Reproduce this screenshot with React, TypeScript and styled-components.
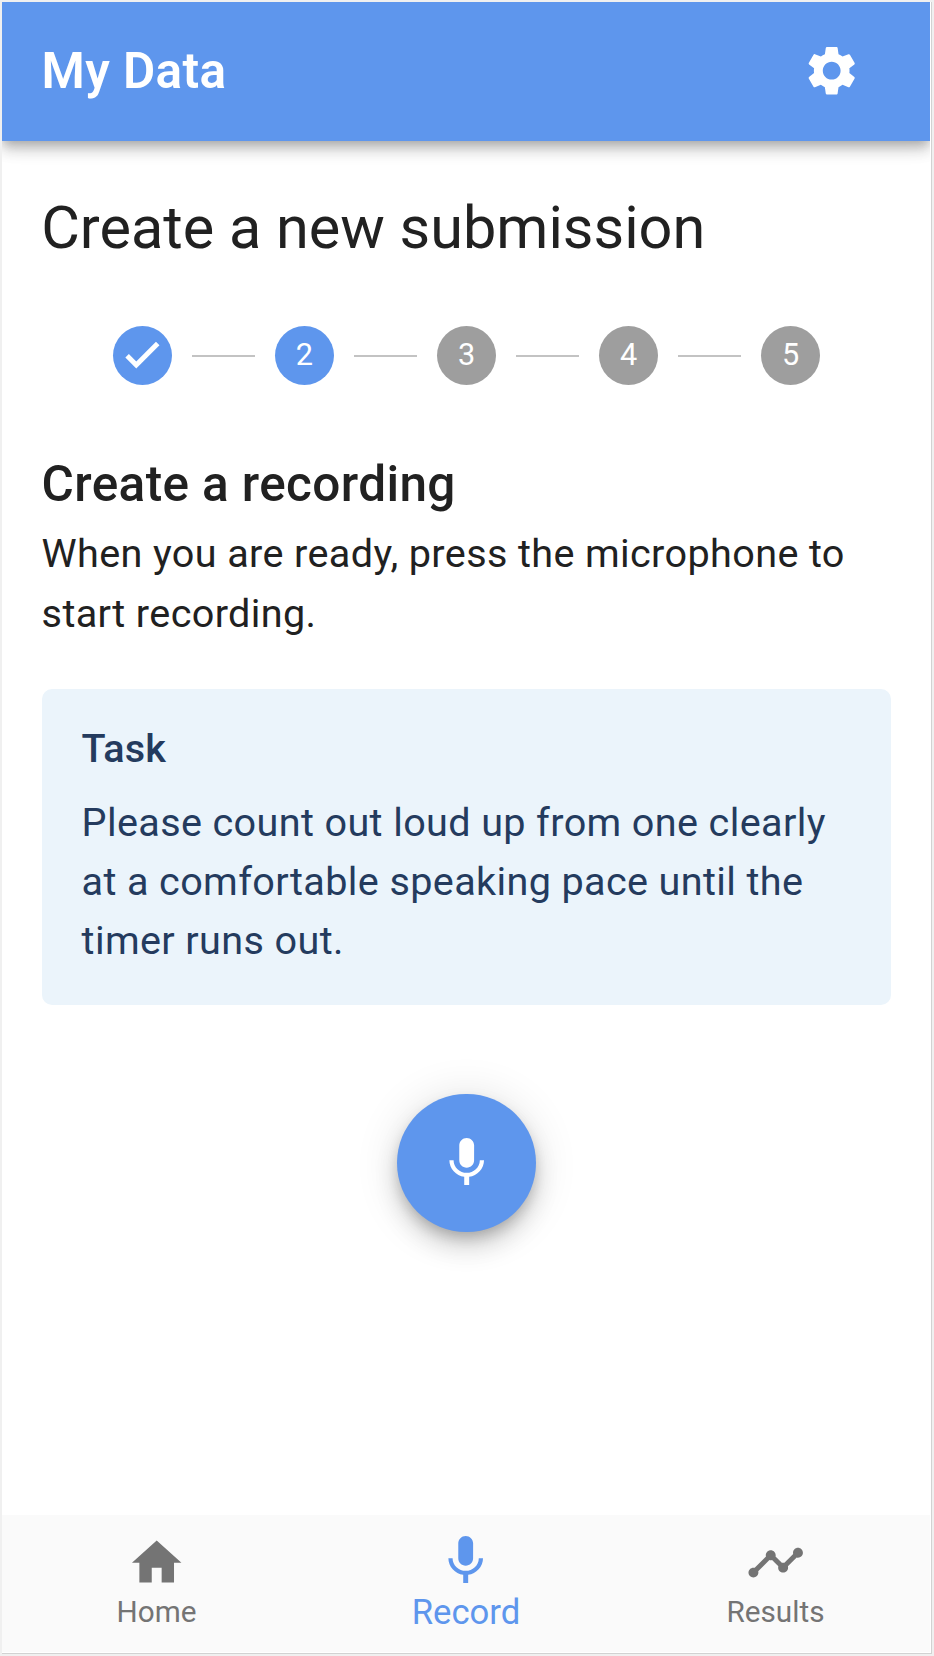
import React from "react";
import styled, { createGlobalStyle } from "styled-components";

const BLUE = "#5e96ed";
const u = (n: number) => `${+(n * 2.475).toFixed(3)}px`;

const GlobalStyle = createGlobalStyle`
  *, *::before, *::after { box-sizing: border-box; }
  body {
    margin: 0;
    background: #f0f0f0;
    font-family: Roboto, "Liberation Sans", sans-serif;
    color: #212121;
  }
`;

const Page = styled.div`
  width: 934px;
  height: 1656px;
  padding: 2px 2px 2px;
  overflow: hidden;
`;

const Screen = styled.div`
  width: 930px;
  height: 1652px;
  display: flex;
  flex-direction: column;
  background: #fff;
  padding-right: 1px;
  border-right: 1px solid #d2d2d2;
  border-bottom: 1px solid #d2d2d2;
`;

const AppBar = styled.header`
  height: 138.6px;
  flex: none;
  display: flex;
  align-items: center;
  justify-content: space-between;
  padding: 0 69px 0 39.6px;
  background: ${BLUE};
  color: #fff;
  clip-path: inset(0 0 -60px 0);
  box-shadow: 0 4.95px 9.9px -2.475px rgba(0, 0, 0, 0.2), 0 9.9px 12.4px rgba(0, 0, 0, 0.14),
    0 2.475px 24.75px rgba(0, 0, 0, 0.12);

  svg {
    margin-bottom: 1px;
  }
`;

const AppTitle = styled.h1`
  margin: 0;
  font-size: ${u(20)};
  font-weight: 600;
  line-height: 1.6;
  letter-spacing: 0.0075em;
`;

const Main = styled.main`
  flex: 1;
  padding: 48.4px 38.6px 0 39.6px;
`;

const Heading = styled.h2`
  margin: 0 0 0 -0.4px;
  font-size: ${u(24)};
  font-weight: 400;
  line-height: 79px;
`;

const Stepper = styled.ol`
  list-style: none;
  margin: 58px 71px 0 71px;
  padding: 0;
  display: flex;
  align-items: center;
  gap: 20px;
`;

const StepDot = styled.li<{ $on?: boolean }>`
  flex: none;
  width: 59.4px;
  height: 59.4px;
  border-radius: 50%;
  display: grid;
  place-items: center;
  background: ${(p) => (p.$on ? BLUE : "#9e9e9e")};
  color: #fff;
  font-size: ${u(12.4)};
  line-height: 1;
  padding-bottom: 1.5px;
`;

const Connector = styled.li`
  flex: 1;
  height: 2px;
  margin-top: 1px;
  background: #c3c3c3;
`;

const Subheading = styled.h3`
  margin: 60px 0 0;
  font-size: ${u(20)};
  font-weight: 500;
  line-height: 79px;
  letter-spacing: 0.0075em;
`;

const Body = styled.p`
  margin: 0;
  font-size: ${u(16)};
  line-height: ${u(24)};
  letter-spacing: 0.00938em;
`;

const TaskCard = styled.section`
  margin-top: 46px;
  height: 315.6px;
  padding: 30px 40px;
  border-radius: 10px;
  background: #ebf4fb;
  color: #243b5e;
`;

const TaskTitle = styled.h4`
  margin: 0 0 14px;
  font-size: ${u(16)};
  font-weight: 500;
  line-height: ${u(24)};
  letter-spacing: 0.004em;
`;

const RecordButton = styled.button`
  display: grid;
  place-items: center;
  width: ${u(56)};
  height: ${u(56)};
  margin: 89px auto 0;
  padding: 0;
  border: 0;
  border-radius: 50%;
  background: ${BLUE};
  color: #fff;
  box-shadow: 0 7.4px 12.4px -2.5px rgba(0, 0, 0, 0.2), 0 14.9px 24.8px rgba(0, 0, 0, 0.14),
    0 2.5px 44.6px rgba(0, 0, 0, 0.12);
`;

const BottomNav = styled.nav`
  flex: none;
  height: 137.4px;
  margin: 0 0 1px;
  display: grid;
  grid-template-columns: 309px 310px 309px;
  background: #fafafa;
`;

const NavItem = styled.a<{ $active?: boolean }>`
  display: flex;
  flex-direction: column;
  align-items: center;
  padding-top: ${(p) => (p.$active ? "16.6px" : "18.6px")};
  color: ${(p) => (p.$active ? BLUE : "#747474")};
`;

const NavLabel = styled.span<{ $active?: boolean }>`
  font-size: ${(p) => (p.$active ? u(14) : u(12))};
  line-height: ${(p) => (p.$active ? "42px" : "37px")};
`;

const Icon = styled.svg`
  display: block;
  width: 59.4px;
  height: 59.4px;
  fill: currentColor;
`;

const paths = {
  settings:
    "M19.14 12.94c.04-.3.06-.61.06-.94 0-.32-.02-.64-.07-.94l2.03-1.58c.18-.14.23-.41.12-.61l-1.92-3.32c-.12-.22-.37-.29-.59-.22l-2.39.96c-.5-.38-1.03-.7-1.62-.94L14.4 2.81c-.04-.24-.24-.41-.48-.41h-3.84c-.24 0-.43.17-.47.41L9.25 5.35C8.66 5.59 8.12 5.92 7.63 6.29L5.24 5.33c-.22-.08-.47 0-.59.22L2.74 8.87C2.62 9.08 2.66 9.34 2.86 9.48l2.03 1.58C4.84 11.36 4.8 11.69 4.8 12s.02.64.07.94l-2.03 1.58c-.18.14-.23.41-.12.61l1.92 3.32c.12.22.37.29.59.22l2.39-.96c.5.38 1.03.7 1.62.94l.36 2.54c.05.24.24.41.48.41h3.84c.24 0 .44-.17.47-.41l.36-2.54c.59-.24 1.13-.56 1.62-.94l2.39.96c.22.08.47 0 .59-.22l1.92-3.32c.12-.22.07-.47-.12-.61L19.14 12.94zM12 15.6c-1.98 0-3.6-1.62-3.6-3.6s1.62-3.6 3.6-3.6 3.6 1.62 3.6 3.6S13.98 15.6 12 15.6z",
  mic: "M12 14c1.66 0 2.99-1.34 2.99-3L15 5c0-1.66-1.34-3-3-3S9 3.34 9 5v6c0 1.66 1.34 3 3 3zm5.3-3c0 3-2.54 5.1-5.3 5.1S6.7 14 6.7 11H5c0 3.41 2.72 6.23 6 6.72V21h2v-3.28c3.28-.48 6-3.3 6-6.72h-1.7z",
  home: "M10 20v-6h4v6h5v-8h3L12 3 2 12h3v8z",
  timeline:
    "M23 8c0 1.1-.9 2-2 2-.18 0-.35-.02-.51-.07l-3.56 3.55c.05.16.07.34.07.52 0 1.1-.9 2-2 2s-2-.9-2-2c0-.18.02-.36.07-.52l-2.55-2.55c-.16.05-.34.07-.52.07s-.36-.02-.52-.07l-4.55 4.56c.05.16.07.33.07.51 0 1.1-.9 2-2 2s-2-.9-2-2 .9-2 2-2c.18 0 .35.02.51.07l4.56-4.55C8.02 9.36 8 9.18 8 9c0-1.1.9-2 2-2s2 .9 2 2c0 .18-.02.36-.07.52l2.55 2.55c.16-.05.34-.07.52-.07s.36.02.52.07l3.55-3.56C19.02 8.35 19 8.18 19 8c0-1.1.9-2 2-2s2 .9 2 2z",
};

const Glyph = ({ name }: { name: keyof typeof paths }) => (
  <Icon viewBox="0 0 24 24" aria-hidden="true">
    <path d={paths[name]} />
  </Icon>
);

const CheckIcon = styled(Icon)`
  width: 46px;
  height: 46px;
  fill: none;
  stroke: currentColor;
  stroke-width: 2.6;
`;

const tabs: { label: string; icon: keyof typeof paths; active?: boolean }[] = [
  { label: "Home", icon: "home" },
  { label: "Record", icon: "mic", active: true },
  { label: "Results", icon: "timeline" },
];

export default function App() {
  return (
    <Page>
      <GlobalStyle />
      <Screen>
        <AppBar>
          <AppTitle>My Data</AppTitle>
          <Glyph name="settings" />
        </AppBar>
        <Main>
          <Heading>Create a new submission</Heading>
          <Stepper>
            <StepDot $on>
              <CheckIcon viewBox="0 0 24 24" aria-label="Completed">
                <path d="M4.23 12.39L9 17.16 20.2 5.96" />
              </CheckIcon>
            </StepDot>
            {[2, 3, 4, 5].map((n) => (
              <React.Fragment key={n}>
                <Connector />
                <StepDot $on={n === 2}>{n}</StepDot>
              </React.Fragment>
            ))}
          </Stepper>
          <Subheading>Create a recording</Subheading>
          <Body>When you are ready, press the microphone to start recording.</Body>
          <TaskCard>
            <TaskTitle>Task</TaskTitle>
            <Body>
              Please count out loud up from one clearly at a comfortable speaking pace until the
              timer runs out.
            </Body>
          </TaskCard>
          <RecordButton aria-label="Start recording">
            <Glyph name="mic" />
          </RecordButton>
        </Main>
        <BottomNav>
          {tabs.map((t) => (
            <NavItem key={t.label} $active={t.active}>
              <Glyph name={t.icon} />
              <NavLabel $active={t.active}>{t.label}</NavLabel>
            </NavItem>
          ))}
        </BottomNav>
      </Screen>
    </Page>
  );
}
